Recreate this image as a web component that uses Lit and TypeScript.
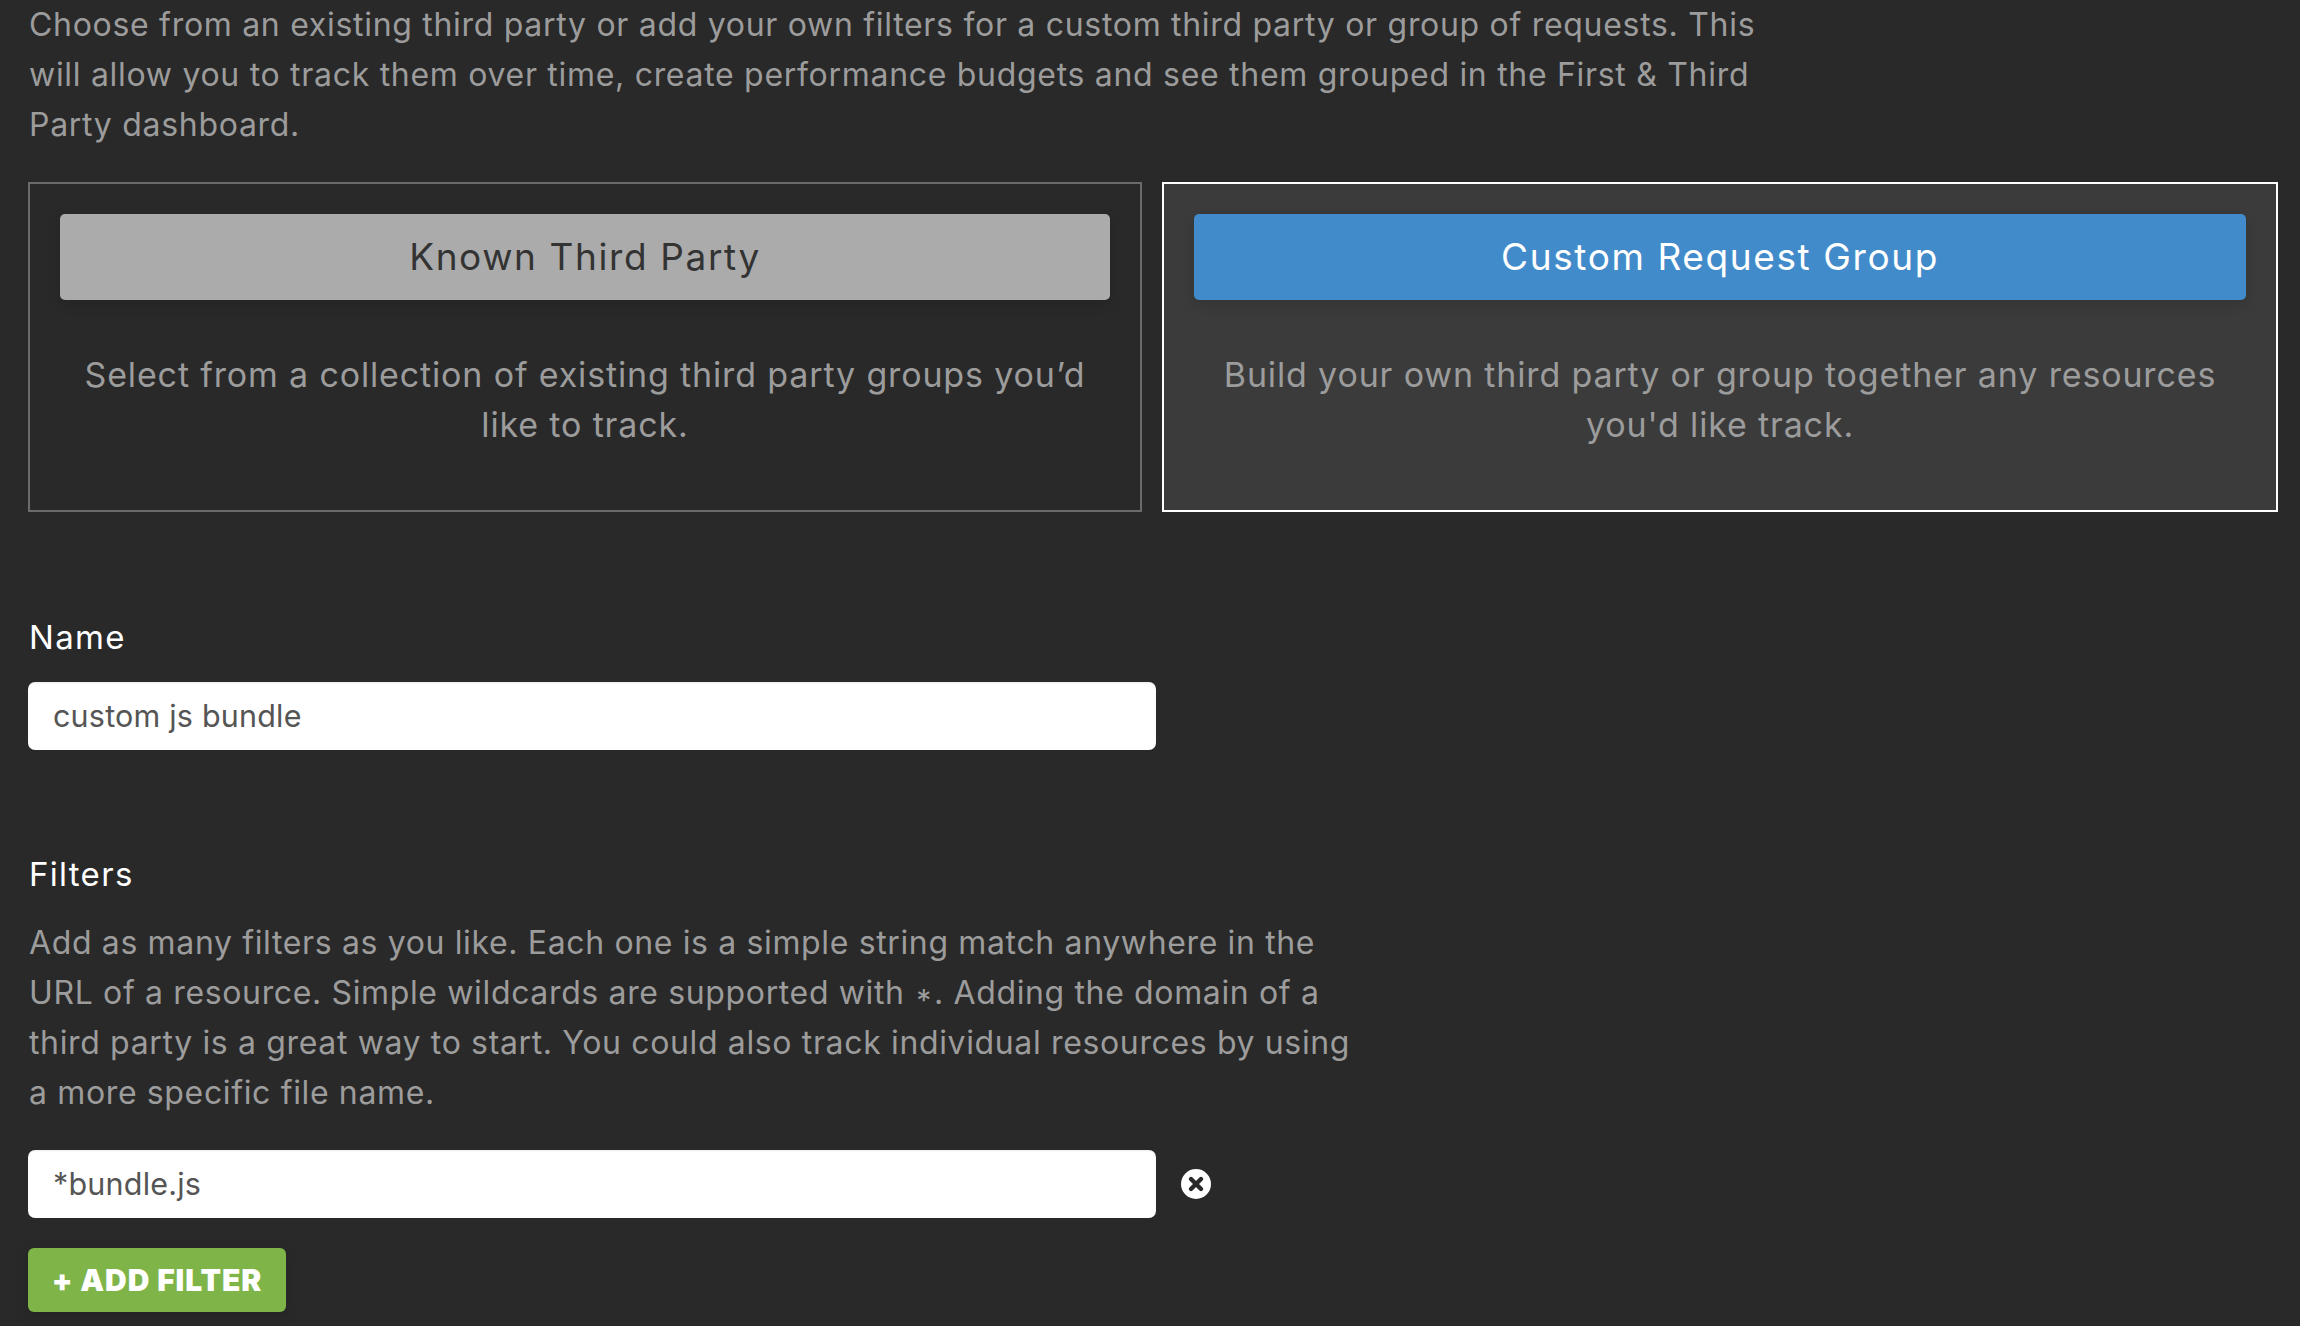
import { LitElement, html, css } from "lit";
import { customElement } from "lit/decorators.js";

@customElement("app-root")
export class AppRoot extends LitElement {
  static styles = css`
    :host {
      display: block;
      height: 1326px;
      overflow: hidden;
      box-sizing: border-box;
      background: #292929;
      color: #9c9c9c;
      font-family: Inter, "Liberation Sans", sans-serif;
      font-size: 32px;
      font-weight: 400;
      letter-spacing: 0.7px;
      line-height: 50px;
    }
    .page {
      padding: 0 22px 0 28px;
    }
    p {
      margin: 0;
    }
    .intro {
      width: 1775px;
      padding-left: 1px;
    }
    .choices {
      display: grid;
      grid-template-columns: 1114px 1116px;
      gap: 20px;
      margin-top: 32px;
    }
    .choice {
      box-sizing: border-box;
      height: 330px;
      padding: 30px;
      border: 2px solid #6b6b6b;
      text-align: center;
    }
    .choice.active {
      background: #3b3b3b;
      border-color: #fff;
    }
    .choice-btn {
      display: flex;
      align-items: center;
      justify-content: center;
      height: 86px;
      border-radius: 5px;
      background: #ababab;
      color: #333;
      font-size: 37px;
      letter-spacing: 1.6px;
      box-shadow: 0 4px 14px rgba(0, 0, 0, 0.12);
    }
    .active .choice-btn {
      background: #428bca;
      color: #fff;
    }
    .choice p {
      margin-top: 50px;
      font-size: 34px;
      letter-spacing: 0.85px;
    }
    .name-field {
      margin-top: 100px;
    }
    label {
      display: block;
      padding-left: 1px;
      color: #fff;
      font-size: 33px;
      letter-spacing: 1.3px;
    }
    .input {
      box-sizing: border-box;
      display: flex;
      align-items: center;
      width: 1128px;
      height: 68px;
      padding: 0 25px;
      border-radius: 7px;
      background: #fff;
      color: #555;
      font-size: 30.5px;
      letter-spacing: 0.2px;
      box-shadow: inset 0 1px 2px rgba(0, 0, 0, 0.08);
    }
    .name-field .input {
      margin-top: 20px;
    }
    .filters {
      margin-top: 99px;
    }
    .filters p {
      margin-top: 19px;
      padding-left: 1px;
      letter-spacing: 0.64px;
    }
    .line {
      display: block;
    }
    .star {
      padding: 0 2px;
      font-size: 30px;
      line-height: 0;
      vertical-align: -7px;
    }
    .filter-row {
      display: flex;
      align-items: center;
      gap: 25px;
      margin-top: 32px;
    }
    .remove {
      display: block;
      width: 30px;
      height: 30px;
    }
    .add {
      display: flex;
      align-items: center;
      justify-content: center;
      box-sizing: border-box;
      width: 258px;
      height: 64px;
      margin-top: 30px;
      border-radius: 6px;
      background: #7fb449;
      color: #fff;
      font-size: 30px;
      font-weight: 900;
      letter-spacing: 0.9px;
      box-shadow: 0 4px 14px rgba(0, 0, 0, 0.12);
    }
  `;

  render() {
    return html`
      <div class="page">
        <p class="intro">
          Choose from an existing third party or add your own filters for a custom third party or group of requests. This will allow you to track them over time, create performance budgets and see them grouped in the First &amp; Third Party dashboard.
        </p>
        <div class="choices">
          <div class="choice">
            <div class="choice-btn">Known Third Party</div>
            <p>Select from a collection of existing third party groups you’d like to track.</p>
          </div>
          <div class="choice active">
            <div class="choice-btn">Custom Request Group</div>
            <p>Build your own third party or group together any resources you'd like track.</p>
          </div>
        </div>
        <div class="name-field">
          <label>Name</label>
          <div class="input">custom js bundle</div>
        </div>
        <div class="filters">
          <label>Filters</label>
          <p>
            <span class="line">Add as many filters as you like. Each one is a simple string match anywhere in the</span>
            <span class="line">URL of a resource. Simple wildcards are supported with <span class="star">*</span>. Adding the domain of a</span>
            <span class="line">third party is a great way to start. You could also track individual resources by using</span>
            <span class="line">a more specific file name.</span>
          </p>
          <div class="filter-row">
            <div class="input">*bundle.js</div>
            <svg class="remove" viewBox="0 0 30 30" aria-hidden="true">
              <circle cx="15" cy="15" r="15" fill="#fff"></circle>
              <path d="M10 10 L20 20 M20 10 L10 20" stroke="#292929" stroke-width="4.4" stroke-linecap="round"></path>
            </svg>
          </div>
          <div class="add">+ ADD FILTER</div>
        </div>
      </div>
    `;
  }
}
